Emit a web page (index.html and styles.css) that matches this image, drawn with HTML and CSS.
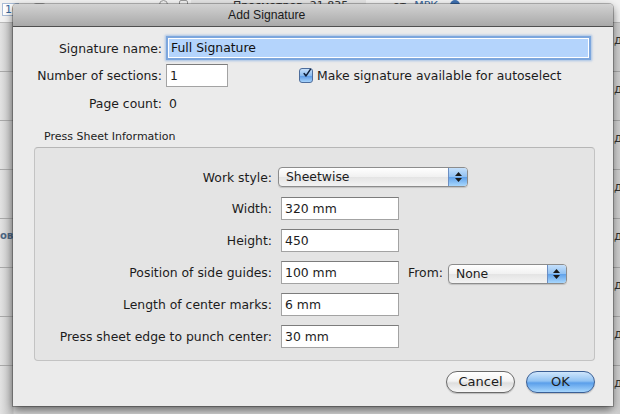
FILE: index.html
```html
<!DOCTYPE html>
<html>
<head>
<meta charset="utf-8">
<link rel="stylesheet" href="styles.css">
</head>
<body>
<div class="page">
  <div class="bg-top">
    <span class="pg">10</span>
    <span class="pgbox"></span>
    <span class="ico ico1"></span>
    <span class="ico ico2"></span>
    <span class="views">Просмотров: 21 835</span>
    <span class="ot">от</span>
    <span class="mrk">МРК</span>
    <span class="badge"></span>
  </div>
  <div class="bg-row"><span class="cell-l"></span><span class="cell-r">д</span></div>
  <div class="bg-row"><span class="cell-l"></span><span class="cell-r">д</span></div>
  <div class="bg-row"><span class="cell-l"></span><span class="cell-r">д</span></div>
  <div class="bg-row"><span class="cell-l"></span><span class="cell-r">д</span></div>
  <div class="bg-row"><span class="cell-l">ов</span><span class="cell-r">д</span></div>
  <div class="bg-row"><span class="cell-l"></span><span class="cell-r">д</span></div>
  <div class="bg-row"><span class="cell-l"></span><span class="cell-r">д</span></div>
  <div class="bg-row"><span class="cell-l"></span><span class="cell-r">д</span></div>
</div>

<div class="dialog">
  <div class="titlebar"><span class="title">Add Signature</span></div>
  <div class="body">
    <div class="top-grid">
      <span class="lbl">Signature name:</span>
      <div class="field field-name"><span class="sel">Full Signature</span></div>
      <span class="lbl">Number of sections:</span>
      <div class="row2">
        <div class="field field-sec">1</div>
        <div class="check">
          <span class="cb"><svg width="15" height="15" viewBox="0 0 15 15"><path d="M3.2 7.6 L6 11.2 L12.6 1.2" fill="none" stroke="#10203a" stroke-width="2.2" stroke-linejoin="round" stroke-linecap="round"/></svg></span>
          <span>Make signature available for autoselect</span>
        </div>
      </div>
      <span class="lbl">Page count:</span>
      <span class="val">0</span>
    </div>

    <div class="group-title">Press Sheet Information</div>
    <div class="group">
      <div class="g-grid">
        <span class="lbl">Work style:</span>
        <div class="popup popup-wide"><span class="ptext">Sheetwise</span><span class="parrow"><svg width="9" height="12" viewBox="0 0 9 12"><path d="M4.5 1 L8 5 L1 5 Z M1 7 L8 7 L4.5 11 Z" fill="#1a1a1a"/></svg></span></div>

        <span class="lbl">Width:</span>
        <div class="field">320 mm</div>
        <span></span>

        <span class="lbl">Height:</span>
        <div class="field">450</div>
        <span></span>

        <span class="lbl">Position of side guides:</span>
        <div class="field">100 mm</div>
        <div class="from">
          <span class="lbl">From:</span>
          <div class="popup popup-from"><span class="ptext">None</span><span class="parrow"><svg width="9" height="12" viewBox="0 0 9 12"><path d="M4.5 1 L8 5 L1 5 Z M1 7 L8 7 L4.5 11 Z" fill="#1a1a1a"/></svg></span></div>
        </div>

        <span class="lbl">Length of center marks:</span>
        <div class="field">6 mm</div>
        <span></span>

        <span class="lbl">Press sheet edge to punch center:</span>
        <div class="field">30 mm</div>
        <span></span>
      </div>
    </div>

    <div class="buttons">
      <div class="btn">Cancel</div>
      <div class="btn btn-ok">OK</div>
    </div>
  </div>
</div>
</body>
</html>
```
FILE: styles.css
```css
* { box-sizing: border-box; }
html, body {
  margin: 0;
  padding: 0;
  width: 620px;
  height: 414px;
  overflow: hidden;
}
body {
  position: relative;
  font-family: "DejaVu Sans", "Noto Sans", sans-serif;
  font-size: 12.4px;
  color: #1c1c1c;
  background: #d4d4d4;
}

/* ---------- background page ---------- */
.page {
  width: 620px;
  height: 414px;
  display: flex;
  flex-direction: column;
}
.bg-top {
  height: 23px;
  flex: none;
  display: flex;
  align-items: flex-start;
  background: #f2f2f2;
  border-bottom: 1px solid #b9b9b9;
  font-size: 11px;
  line-height: 12px;
}
.pg {
  margin: 3px 0 0 2px;
  width: 17px;
  height: 13px;
  border: 1px solid #a9bcd6;
  color: #3a6aa0;
  background: #fff;
  padding-left: 2px;
  font-size: 11px;
  line-height: 11px;
}
.pgbox {
  margin: 3px 0 0 14px;
  width: 13px;
  height: 10px;
  border: 1px solid #aaa;
  border-radius: 3px;
  background: #f8f8f8;
}
.ico {
  width: 9px;
  height: 9px;
  border: 1px solid #999;
  border-radius: 50%;
}
.ico1 { margin-left: 113px; }
.ico2 { margin-left: 11px; border-radius: 2px; }
.views {
  margin-left: 3px;
  width: 175px;
  height: 23px;
  background: #e4e4e4;
  color: #333;
  padding-left: 42px;
  line-height: 12px;
  padding-top: 0;
}
.ot { margin: 0 0 0 27px; color: #444; }
.mrk { margin: 0 0 0 8px; color: #3a6aa0; }
.badge {
  margin: 0 0 0 12px;
  width: 10px;
  height: 10px;
  border-radius: 50%;
  background: #3d6fb0;
}
.bg-row {
  height: 49px;
  flex: none;
  display: flex;
  justify-content: space-between;
  border-bottom: 1px solid #a8a8a8;
  background: linear-gradient(to right, #e2e2e2 0px, #c4c4c4 13px, #d9d9d9 14px, #d9d9d9 613px, #cfcfcf 620px);
}
.cell-l {
  width: 13px;
  padding-top: 11px;
  font-size: 10px;
  font-weight: bold;
  color: #4b6482;
  overflow: hidden;
  white-space: nowrap;
}
.cell-r {
  width: 6px;
  padding-top: 10px;
  font-size: 12px;
  color: #333;
  overflow: hidden;
}

/* ---------- dialog ---------- */
.dialog {
  position: absolute;
  left: 13px;
  top: 4px;
  width: 600px;
  height: 402px;
  background: #ebebeb;
  border-radius: 4px 4px 0 0;
  box-shadow: 0 4px 10px rgba(0,0,0,0.55), 0 0 0 1px rgba(0,0,0,0.25);
}
.titlebar {
  height: 23px;
  border-bottom: 1px solid #4f4f4f;
  border-radius: 4px 4px 0 0;
  background: linear-gradient(#d2d2d2, #a9a9a9);
  padding-left: 215px;
  font-family: "Liberation Sans", "DejaVu Sans", sans-serif;
  font-size: 12.2px;
  line-height: 22px;
  color: #1a1a1a;
}
.body {
  padding-top: 11px;
}
.lbl {
  text-align: right;
  white-space: nowrap;
}
.top-grid {
  display: grid;
  grid-template-columns: 149px 1fr;
  grid-template-rows: 20px 23px 20px;
  row-gap: 6px;
  column-gap: 5px;
  align-items: center;
  padding-right: 24px;
}
.field {
  height: 23px;
  background: #fff;
  border: 1px solid #a3a3a3;
  border-top-color: #7c7c7c;
  padding: 0 0 0 3px;
  line-height: 21px;
  white-space: nowrap;
}
.field-name {
  height: 20px;
  margin-left: 1px;
  border: 1px solid #fff;
  background: #b4d4fc;
  box-shadow: 0 0 0 2px #7ca6dd, 0 0 2px 3px rgba(110,160,225,0.55);
  line-height: 18px;
  padding-left: 2px;
}
.sel { color: #111; }
.row2 {
  display: flex;
  align-items: center;
}
.field-sec {
  width: 62px;
  margin-left: -1px;
}
.check {
  display: flex;
  align-items: center;
  margin-left: 71px;
  white-space: nowrap;
}
.cb {
  width: 14px;
  height: 15px;
  border: 1px solid #4d6d9c;
  border-radius: 3px;
  background: linear-gradient(#c7e0fa, #8cbcee 50%, #5f9ce6 55%, #a5d2fb);
  margin-right: 4px;
  display: flex;
  align-items: flex-start;
  justify-content: center;
  overflow: visible;
}
.cb svg { margin-top: -3px; margin-left: 2px; }
.val { padding-left: 2px; }

.group-title {
  margin: 17px 0 0 31px;
  font-size: 11px;
  line-height: 14px;
  height: 14px;
}
.group {
  margin: 3px 18px 0 21px;
  height: 214px;
  border: 1px solid #c3c3c3;
  border-top-color: #b6b6b6;
  border-radius: 4px;
  background: #e4e4e4;
  padding-top: 18px;
}
.g-grid {
  display: grid;
  grid-template-columns: 237px 118px 1fr;
  grid-template-rows: 22px repeat(5, 23px);
  row-gap: 9px;
  column-gap: 9px;
  align-items: center;
}
.popup {
  height: 20px;
  display: flex;
  border: 1px solid #8c8c8c;
  border-radius: 4px;
  background: linear-gradient(#ffffff, #f1f1f1 50%, #e4e4e4 51%, #f3f3f3);
  box-shadow: 0 1px 1px rgba(0,0,0,0.15);
  overflow: hidden;
}
.popup-wide {
  grid-column: 2 / 4;
  width: 190px;
  margin-left: -3px;
}
.ptext {
  flex: 1;
  padding-left: 7px;
  line-height: 18px;
}
.parrow {
  width: 19px;
  border-left: 1px solid #6c8ec2;
  background: linear-gradient(#c5e0fb, #8fc0f2 50%, #61a2ea 52%, #a8d7fd);
  display: flex;
  align-items: center;
  justify-content: center;
}
.from {
  display: flex;
  align-items: center;
  column-gap: 5px;
}
.popup-from {
  width: 119px;
  margin-top: 3px;
}
.buttons {
  display: flex;
  justify-content: flex-end;
  column-gap: 11px;
  margin: 10px 18px 0 0;
}
.btn {
  width: 69px;
  height: 22px;
  border: 1px solid #6a6a6a;
  border-radius: 11px;
  background: linear-gradient(#ffffff, #f3f3f3 45%, #dedede 55%, #f7f7f7);
  text-align: center;
  line-height: 20px;
  font-size: 13px;
  box-shadow: 0 1px 1px rgba(0,0,0,0.2);
}
.btn-ok {
  border-color: #3b5f95;
  background: linear-gradient(#cfe6fc, #92c3f3 45%, #5b9fea 55%, #a6d6fd);
}
```
